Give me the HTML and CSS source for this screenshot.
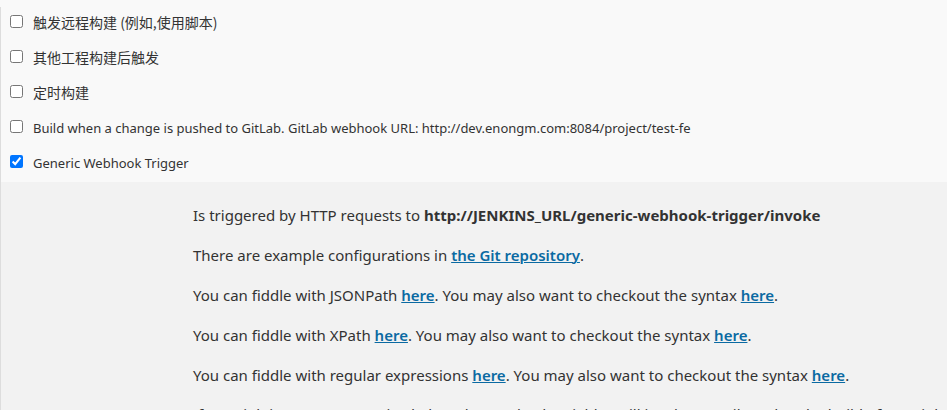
FILE: index.html
```html
<!DOCTYPE html>
<html lang="zh-CN">
<head>
<meta charset="utf-8">
<title>构建触发器</title>
<link rel="stylesheet" href="styles.css">
</head>
<body>
<main class="config">
  <form class="triggers">
    <label class="trigger trigger-cjk"><input type="checkbox"><span>触发远程构建 (例如,使用脚本)</span></label>
    <label class="trigger trigger-cjk"><input type="checkbox"><span>其他工程构建后触发</span></label>
    <label class="trigger trigger-cjk"><input type="checkbox"><span>定时构建</span></label>
    <label class="trigger"><input type="checkbox"><span>Build when a change is pushed to GitLab. GitLab webhook URL: http://dev.enongm.com:8084/project/test-fe</span></label>
    <label class="trigger"><input type="checkbox" checked><span>Generic Webhook Trigger</span></label>
  </form>
  <section class="details" lang="en">
    <p>Is triggered by HTTP requests to <b>http://JENKINS_URL/generic-webhook-trigger/invoke</b></p>
    <p>There are example configurations in <a href="#git">the Git repository</a>.</p>
    <p>You can fiddle with JSONPath <a href="#jsonpath">here</a>. You may also want to checkout the syntax <a href="#jsonpath-syntax">here</a>.</p>
    <p>You can fiddle with XPath <a href="#xpath">here</a>. You may also want to checkout the syntax <a href="#xpath-syntax">here</a>.</p>
    <p>You can fiddle with regular expressions <a href="#regex">here</a>. You may also want to checkout the syntax <a href="#regex-syntax">here</a>.</p>
    <p class="note">If your job is not parameterized, then the resolved variables will just be contributed to the build. If your job</p>
  </section>
</main>
</body>
</html>
```
FILE: styles.css
```css
html {
  background: #f9f9f9;
  overflow: hidden;
}

body {
  margin: 0;
  padding-top: 7px;
  color: #333;
  font-family: "Segoe UI", "Noto Sans", "Noto Sans CJK SC", sans-serif;
  font-size: 15px;
}

.config {
  border-left: 1px solid #ddd;
}

.triggers {
  display: flex;
  flex-direction: column;
}

.trigger {
  display: flex;
  align-items: flex-start;
  gap: 10px;
  height: 35px;
  padding-left: 9px;
  font-size: 13px;
  line-height: 32px;
}

.trigger-cjk {
  font-family: "Noto Sans CJK SC", sans-serif;
  font-size: 14px;
  line-height: 30px;
}

.trigger input {
  flex: none;
  width: 13px;
  height: 13px;
  margin: 8px 0 0;
}

.details {
  padding: 23px 0 0 192px;
  background: #f2f2f2;
}

.details p {
  margin: 0 0 20px;
  line-height: 20px;
}

.details .note {
  line-height: 18px;
  white-space: nowrap;
}

.details b {
  font-weight: 700;
}

.details a {
  color: #0b6aa2;
  font-weight: 600;
  text-decoration: underline;
  text-decoration-thickness: 1px;
}
```
